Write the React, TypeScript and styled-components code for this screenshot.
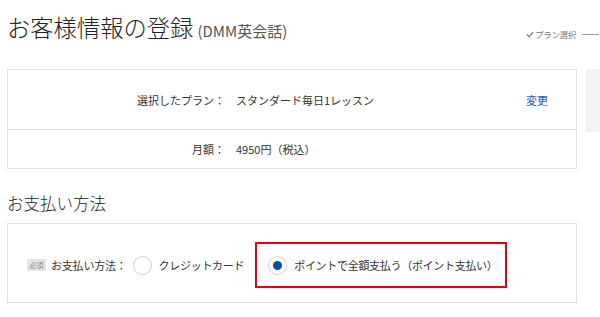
import styled, { createGlobalStyle } from "styled-components";

const GlobalStyle = createGlobalStyle`
  html, body {
    margin: 0;
    padding: 0;
    background: #fff;
    overflow: hidden;
  }
  body {
    font-family: "Noto Sans CJK JP", "Noto Sans", sans-serif;
    color: #333;
  }
`;

const Page = styled.div`
  width: 600px;
  height: 317px;
  padding: 17px 0 0 7px;
  box-sizing: border-box;
  overflow: hidden;
`;

const Header = styled.header`
  display: flex;
  align-items: flex-end;
  justify-content: space-between;
  height: 28px;
`;

const Title = styled.h1`
  margin: 0;
  font-size: 23.3px;
  font-weight: 300;
  line-height: 28px;
  color: #222;
`;

const SubTitle = styled.span`
  font-size: 15px;
  font-weight: 400;
  color: #555;
  margin-left: 4px;
`;

const Step = styled.div`
  display: flex;
  align-items: center;
  gap: 1px;
  font-size: 8.5px;
  letter-spacing: -0.3px;
  color: #777;
  margin: 0 1px 5px 0;
`;

const StepLine = styled.span`
  display: block;
  width: 17px;
  height: 1px;
  background: #999;
  margin-left: 5px;
`;

const Main = styled.div`
  display: flex;
  align-items: flex-start;
  gap: 9px;
  margin-top: 24px;
`;

const Column = styled.div`
  width: 570px;
  flex-shrink: 0;
`;

const SidePanel = styled.div`
  width: 40px;
  height: 63px;
  background: #f3f3f3;
  flex-shrink: 0;
`;

const Box = styled.div`
  border: 1px solid #e3e3e3;
  background: #fff;
`;

const PlanRow = styled.div<{ $height: number; $divider?: boolean }>`
  display: grid;
  grid-template-columns: 217px 1fr auto;
  column-gap: 11px;
  align-items: center;
  height: ${({ $height }) => $height}px;
  padding-right: 28px;
  font-size: 11px;
  border-bottom: ${({ $divider }) => ($divider ? "1px solid #e3e3e3" : "none")};
`;

const RowLabel = styled.span`
  text-align: right;
`;

const ChangeLink = styled.a`
  color: #1a5bb8;
  text-decoration: none;
  font-size: 11px;
  cursor: pointer;
`;

const Heading = styled.h2`
  margin: 22px 0 8px;
  font-size: 16.5px;
  font-weight: 300;
  line-height: 24px;
  color: #222;
`;

const PaymentBox = styled(Box)`
  display: flex;
  align-items: center;
  padding: 18px 0 14px 19px;
  font-size: 11px;
`;

const Badge = styled.span`
  display: inline-flex;
  align-items: center;
  justify-content: center;
  width: 19px;
  height: 12px;
  background: #e4e4e4;
  color: #888;
  font-size: 7px;
  border-radius: 1px;
  margin-right: 5px;
`;

const FieldLabel = styled.span`
  margin-right: 6px;
  letter-spacing: -0.2px;
`;

const Option = styled.label<{ $highlight?: boolean }>`
  display: flex;
  align-items: center;
  gap: 7px;
  height: 46px;
  box-sizing: border-box;
  border: ${({ $highlight }) => ($highlight ? "2px solid #e60012" : "none")};
  padding: ${({ $highlight }) => ($highlight ? "0 7px 0 11px" : "0")};
  margin-right: ${({ $highlight }) => ($highlight ? "0" : "11px")};
  letter-spacing: -0.3px;
  cursor: pointer;
`;

const Radio = styled.span<{ $checked?: boolean }>`
  position: relative;
  width: 19px;
  height: 19px;
  box-sizing: border-box;
  border: 1px solid #d2d2d2;
  border-radius: 50%;
  background: #fff;

  &::after {
    content: "";
    display: ${({ $checked }) => ($checked ? "block" : "none")};
    position: absolute;
    left: 4px;
    top: 4px;
    width: 9px;
    height: 9px;
    border-radius: 50%;
    background: #0d4c9c;
  }
`;

export default function App() {
  return (
    <>
      <GlobalStyle />
      <Page>
        <Header>
          <Title>
            お客様情報の登録<SubTitle>(DMM英会話)</SubTitle>
          </Title>
          <Step>
            <svg width="8" height="7" viewBox="0 0 8 7">
              <path d="M1 3.5 L3.2 5.8 L7 1.2" fill="none" stroke="#777" strokeWidth="1.2" />
            </svg>
            プラン選択
            <StepLine />
          </Step>
        </Header>

        <Main>
          <Column>
            <Box>
              <PlanRow $height={59} $divider>
                <RowLabel>選択したプラン：</RowLabel>
                <span>スタンダード毎日1レッスン</span>
                <ChangeLink>変更</ChangeLink>
              </PlanRow>
              <PlanRow $height={38}>
                <RowLabel>月額：</RowLabel>
                <span>4950円（税込）</span>
                <span />
              </PlanRow>
            </Box>

            <Heading>お支払い方法</Heading>

            <PaymentBox>
              <Badge>必須</Badge>
              <FieldLabel>お支払い方法：</FieldLabel>
              <Option>
                <Radio />
                クレジットカード
              </Option>
              <Option $highlight>
                <Radio $checked />
                ポイントで全額支払う（ポイント支払い）
              </Option>
            </PaymentBox>
          </Column>
          <SidePanel />
        </Main>
      </Page>
    </>
  );
}
